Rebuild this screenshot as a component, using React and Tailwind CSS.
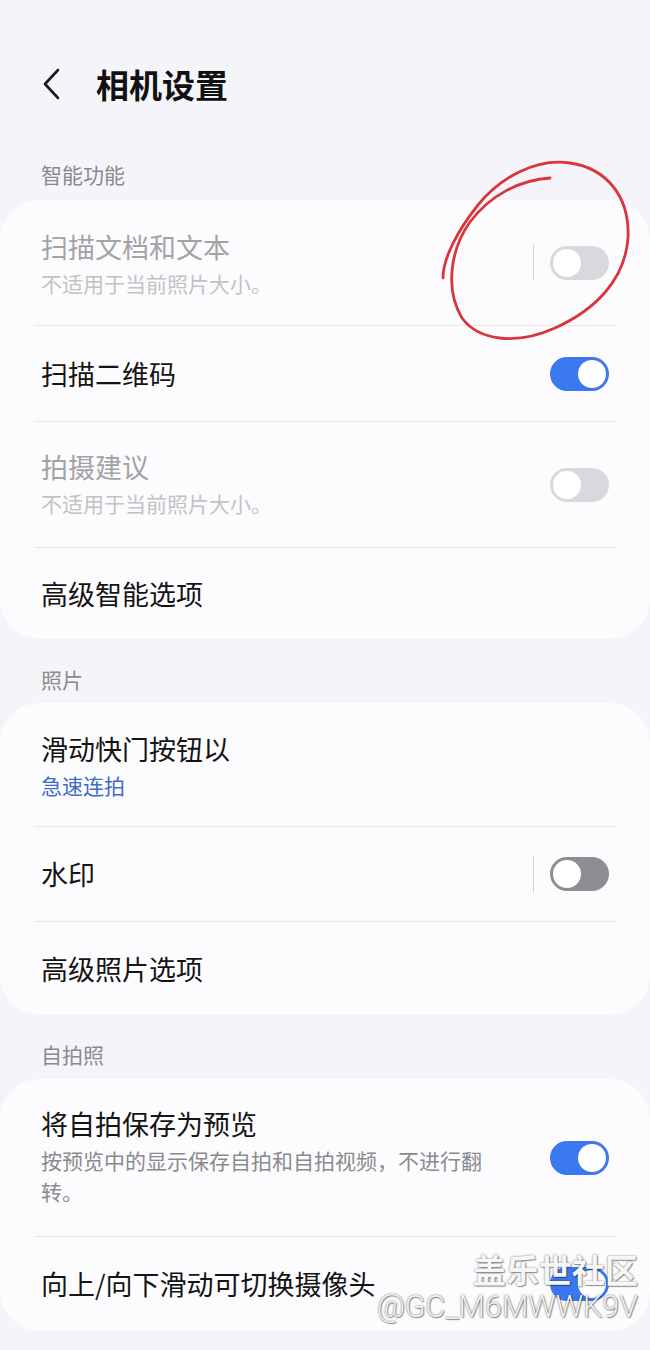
import React from 'react'

function Toggle({ state }) {
    // state: 'on' | 'off' | 'disabled'
    const track =
        state === 'on' ? 'bg-[#3b78f0] justify-end' :
        state === 'off' ? 'bg-[#8d8d92] justify-start' :
        'bg-[#d9d9dd] justify-start'
    return (
        <div className={`w-[59px] h-[34px] rounded-full flex items-center px-[3px] shrink-0 ${track}`}>
            <div className="w-[28px] h-[28px] rounded-full bg-white" />
        </div>
    )
}

function Row({ title, sub, subColor, toggle, bar, disabled, h, subWide, shift = 'mt-[4px]' }) {
    return (
        <div className={`flex items-center justify-between pl-[41px] pr-[41px] ${h}`}>
            <div className={`${subWide ? 'max-w-[455px]' : ''} ${sub ? shift : ''}`}>
                <div className={`text-[27px] leading-[34px] ${disabled ? 'text-[#a3a3a6]' : 'text-[#141414]'}`}>{title}</div>
                {sub && (
                    <div className={`text-[21px] leading-[31px] mt-[4px] ${subColor}`}>{sub}</div>
                )}
            </div>
            {toggle && (
                <div className="flex items-center">
                    {bar && <div className="w-px h-[37px] bg-[#d6d6da] mr-[16px]" />}
                    <Toggle state={toggle} />
                </div>
            )}
        </div>
    )
}

const Divider = () => <div className="mx-[34px] h-px bg-[#e7e7eb]" />

function Section({ label }) {
    return <div className="pl-[41px] text-[21px] leading-[28px] text-[#8a8a8e]">{label}</div>
}

export default function App() {
    return (
        <div className="relative w-[650px] h-[1350px] overflow-hidden bg-[#f5f5f9] font-['Noto_Sans_CJK_SC','Noto_Sans',sans-serif]">
            {/* header */}
            <div className="flex items-center pt-[62px] h-[106px]">
                <svg className="ml-[42px] w-[20px] h-[32px]" viewBox="0 0 20 32" fill="none" stroke="#1a1a1a" strokeWidth="2.6" strokeLinecap="round" strokeLinejoin="round">
                    <path d="M16 2 L3 16 L16 30" />
                </svg>
                <h1 className="ml-[34px] text-[33px] leading-[44px] font-bold text-[#111]">相机设置</h1>
            </div>

            <div className="mt-[54px]">
                <Section label="智能功能" />
            </div>
            <div className="mt-[12px] bg-[#fcfcfe] rounded-[40px]">
                <Row h="h-[125px]" title="扫描文档和文本" sub="不适用于当前照片大小。" subColor="text-[#c2c2c5]" disabled toggle="disabled" bar />
                <Divider />
                <Row h="h-[95px]" title="扫描二维码" toggle="on" />
                <Divider />
                <Row h="h-[125px]" title="拍摄建议" sub="不适用于当前照片大小。" subColor="text-[#c2c2c5]" disabled toggle="disabled" shift="mt-0" />
                <Divider />
                <Row h="h-[91px]" title="高级智能选项" />
            </div>

            <div className="mt-[26px]">
                <Section label="照片" />
            </div>
            <div className="mt-[10px] bg-[#fcfcfe] rounded-[40px]">
                <Row h="h-[123px]" title="滑动快门按钮以" sub="急速连拍" subColor="text-[#3d6cc8]" />
                <Divider />
                <Row h="h-[94px]" title="水印" toggle="off" bar />
                <Divider />
                <Row h="h-[93px]" title="高级照片选项" />
            </div>

            <div className="mt-[25px]">
                <Section label="自拍照" />
            </div>
            <div className="mt-[11px] bg-[#fcfcfe] rounded-[40px]">
                <Row h="h-[157px]" title="将自拍保存为预览" sub="按预览中的显示保存自拍和自拍视频，不进行翻转。" subColor="text-[#8a8a8e]" toggle="on" subWide shift="-mt-[2px]" />
                <Divider />
                <Row h="h-[94px]" title="向上/向下滑动可切换摄像头" toggle="on" />
            </div>

            {/* red annotation */}
            <svg className="absolute left-0 top-0 w-[650px] h-[400px] pointer-events-none" viewBox="0 0 650 400" fill="none">
                <path
                    d="M550 178 C 520 180, 490 195, 470 222 C 450 250, 445 290, 462 318 C 478 340, 515 346, 555 328 C 595 310, 625 280, 628 238 C 630 195, 605 168, 570 163 C 535 158, 500 178, 478 205 C 458 230, 443 258, 443 278"
                    stroke="#d9363c" strokeWidth="2.8" strokeLinecap="round"
                />
            </svg>

            {/* watermark */}
            <div className="absolute right-[12px] top-[1249px] flex flex-col items-end">
                <div className="text-[33px] leading-[40px] font-bold text-[#f6f6f6] [text-shadow:0_0_2px_rgba(0,0,0,0.55),1px_1px_1px_rgba(0,0,0,0.35)]">盖乐世社区</div>
                <div className="text-[30.5px] leading-[36px] font-['Roboto',sans-serif] font-light text-[#f2f2f2] [text-shadow:0_0_2px_rgba(0,0,0,0.6),1px_1px_1px_rgba(0,0,0,0.35)]">@GC_M6MWWK9V</div>
            </div>
        </div>
    )
}
